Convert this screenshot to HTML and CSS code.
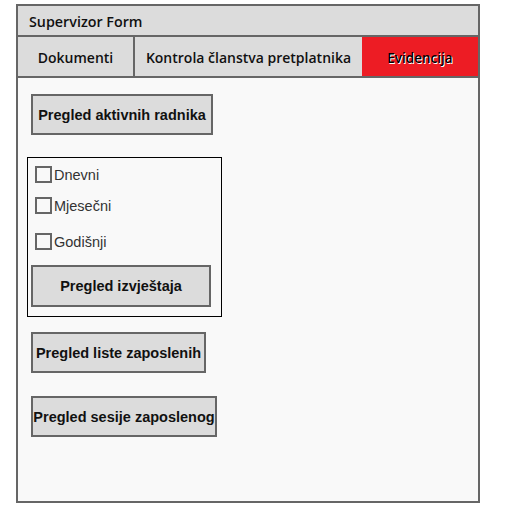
FILE: index.html
```html
<!DOCTYPE html>
<html>
<head>
<meta charset="utf-8">
<link rel="stylesheet" href="styles.css">
</head>
<body>
<div class="frame">
  <div class="title">Supervizor Form</div>
  <div class="tabs">
    <div class="tab tab-doc">Dokumenti</div>
    <div class="tab tab-kon">Kontrola članstva pretplatnika</div>
    <div class="tab tab-evi active">Evidencija</div>
  </div>
  <div class="content">
    <div class="btn btn-aktivni">Pregled aktivnih radnika</div>
    <div class="group">
      <label class="row row1"><span class="box"></span>Dnevni</label>
      <label class="row row2"><span class="box"></span>Mjesečni</label>
      <label class="row row3"><span class="box"></span>Godišnji</label>
      <div class="btn btn-izvj">Pregled izvještaja</div>
    </div>
    <div class="btn btn-liste">Pregled liste zaposlenih</div>
    <div class="btn btn-sesije">Pregled sesije zaposlenog</div>
  </div>
</div>
</body>
</html>
```
FILE: styles.css
```css
html, body {
  margin: 0;
  padding: 0;
  background: #ffffff;
}
body {
  font-family: "Liberation Sans", Arial, sans-serif;
}
.frame {
  margin: 4px 0 0 16px;
  width: 460px;
  height: 495px;
  border: 2px solid #666666;
  background: #f9f9f9;
  display: flex;
  flex-direction: column;
}
.title {
  height: 27px;
  padding-top: 2px;
  padding-left: 11px;
  background: #dcdcdc;
  border-bottom: 2px solid #666666;
  display: flex;
  align-items: center;
  font-family: "Open Sans", sans-serif;
  font-weight: 600;
  font-size: 14.3px;
  color: #111;
}
.tabs {
  height: 39px;
  display: flex;
  border-bottom: 2px solid #666666;
  background: #dcdcdc;
}
.tab {
  box-sizing: border-box;
  display: flex;
  align-items: center;
  justify-content: center;
  padding-top: 2px;
  font-family: "Open Sans", sans-serif;
  font-weight: 600;
  font-size: 14px;
  color: #111;
  white-space: nowrap;
}
.tab-doc {
  width: 117px;
  border-right: 2px solid #666666;
}
.tab-kon {
  width: 227px;
}
.tab-evi {
  flex: 1;
}
.tab.active {
  background: #ed1c24;
  color: #000;
  font-weight: 600;
  font-size: 13.5px;
  text-shadow: 1px 1px 0 #fff;
}
.content {
  flex: 1;
  padding: 16px 0 0 13px;
  display: flex;
  flex-direction: column;
  align-items: flex-start;
}
.btn {
  box-sizing: border-box;
  height: 41px;
  background: #dcdcdc;
  border: 2px solid #666666;
  display: flex;
  align-items: center;
  justify-content: center;
  font-weight: bold;
  font-size: 14.5px;
  color: #111;
  white-space: nowrap;
}
.btn-aktivni { width: 182px; }
.group {
  margin: 22px 0 0 -4px;
  width: 193px;
  height: 158px;
  border: 1px solid #000;
  display: flex;
  flex-direction: column;
  align-items: flex-start;
}
.row {
  display: flex;
  align-items: center;
  height: 17px;
  margin-left: 7px;
  font-size: 14.5px;
  color: #333;
}
.row1 { margin-top: 8px; }
.row2 { margin-top: 14px; }
.row3 { margin-top: 19px; }
.box {
  box-sizing: border-box;
  width: 17px;
  height: 17px;
  border: 2px solid #666666;
  margin-right: 2px;
}
.btn-izvj {
  width: 180px;
  height: 42px;
  margin: 15px 0 0 3px;
}
.btn-liste {
  width: 175px;
  margin-top: 15px;
}
.btn-sesije {
  width: 186px;
  margin-top: 23px;
}
```
